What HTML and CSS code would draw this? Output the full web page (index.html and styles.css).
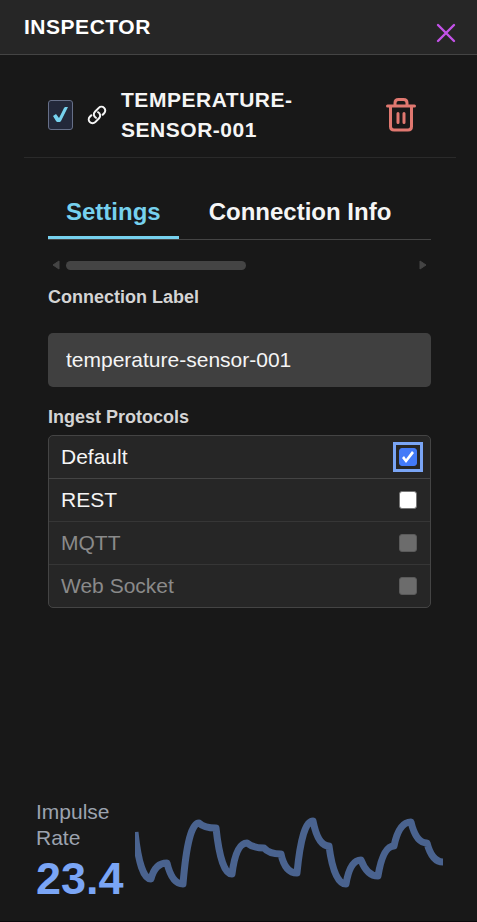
FILE: index.html
```html
<!DOCTYPE html>
<html lang="en">
<head>
<meta charset="utf-8">
<meta name="viewport" content="width=device-width, initial-scale=1">
<title>Inspector</title>
<link rel="stylesheet" href="styles.css">
</head>
<body>
<main class="inspector">
  <header class="topbar">
    <h1 class="heading">Inspector</h1>
    <button class="icon-button close" type="button" aria-label="Close">
      <svg width="20" height="20" viewBox="0 0 20 20"><path d="M2 2l16 16M18 2L2 18"/></svg>
    </button>
  </header>

  <section class="device">
    <input class="device-check" type="checkbox" checked aria-label="Enable device">
    <svg class="link-icon" width="22" height="22" viewBox="0 0 26 26"><path d="M14.190 9.688a4.5 4.5 0 0 1 1.242 7.244l-4.5 4.5a4.5 4.5 0 0 1-6.364-6.364l1.757-1.757m13.35-.622l1.757-1.757a4.5 4.5 0 0 0-6.364-6.364l-4.5 4.5a4.5 4.5 0 0 0 1.242 7.244"/></svg>
    <h2 class="heading device-name">Temperature-sensor-001</h2>
    <button class="icon-button trash" type="button" aria-label="Delete">
      <svg width="30" height="34" viewBox="0 0 30 34"><path d="M1.500 8h27M9 8V5q0-3.500 3.500-3.500h5Q21 1.500 21 5v3M4.500 8v20.500q0 3.500 3.500 3.500h14q3.500 0 3.500-3.500V8M12 15.500v9M18 15.500v9"/></svg>
    </button>
  </section>

  <div class="content">
    <nav class="tabs">
      <button class="tab active" type="button">Settings</button>
      <button class="tab" type="button">Connection Info</button>
    </nav>
    <div class="scroller">
      <svg width="8" height="10" viewBox="0 0 8 10"><path d="M7 1v8L1 5z"/></svg>
      <div class="track"><div class="thumb"></div></div>
      <svg width="8" height="10" viewBox="0 0 8 10"><path d="M1 1v8L7 5z"/></svg>
    </div>

    <label class="caption" for="connection-label">Connection Label</label>
    <input class="text-field" id="connection-label" type="text" value="temperature-sensor-001">

    <fieldset class="protocols">
      <legend class="caption">Ingest Protocols</legend>
      <div class="protocol-list">
        <label class="protocol">Default<input class="box focused" type="checkbox" checked></label>
        <label class="protocol">REST<input class="box" type="checkbox"></label>
        <label class="protocol disabled">MQTT<input class="box" type="checkbox" disabled></label>
        <label class="protocol disabled">Web Socket<input class="box" type="checkbox" disabled></label>
      </div>
    </fieldset>
  </div>

  <footer class="rate">
    <div class="rate-text">
      <div class="rate-label">Impulse Rate</div>
      <div class="rate-value">23.4</div>
    </div>
    <svg class="chart" viewBox="0 0 308 80"><path d="M0 17Q5 64 16 64Q20 48 32 48Q37 69 48 69Q53 8 64 8Q69 13 81 13Q86 59 97 59Q101 28 112 28Q118 33 129 33Q134 39 146 39Q150 58 162 58Q167 6 178 6Q183 31 194 31Q199 69 211 69Q215 45 226 45Q232 61 243 61Q248 31 259 31Q264 7 276 7Q281 28 292 28Q297 47 308 47"/></svg>
  </footer>
</main>
</body>
</html>
```
FILE: styles.css
```css
*, ::before, ::after { box-sizing: border-box; }

body {
  margin: 0;
  background: #181818;
  color: #f5f5f5;
  font-family: "Liberation Sans", Arial, sans-serif;
  font-size: 21px;
}

button, input { font: inherit; color: inherit; margin: 0; }

.inspector {
  display: flex;
  flex-direction: column;
  min-height: 100vh;
  border-bottom: 1px solid #0c080c;
}

.topbar {
  display: flex;
  justify-content: space-between;
  align-items: flex-start;
  padding: 12px 21px 11px 24px;
  background: #262626;
  border-bottom: 1px solid #444;
}

.heading {
  margin: 0;
  font-size: 21px;
  line-height: 30px;
  font-weight: 700;
  letter-spacing: 0.025em;
  text-transform: uppercase;
}

.topbar .heading { color: #fff; }

.icon-button {
  display: block;
  padding: 0;
  border: 0;
  background: none;
}

.icon-button svg, .link-icon {
  display: block;
  fill: none;
  stroke: currentColor;
  stroke-width: 2.4;
  stroke-linecap: round;
  stroke-linejoin: round;
}

.close { color: #c352e8; padding-top: 11px; }

.device {
  display: flex;
  align-items: center;
  margin: 0 21px 0 24px;
  padding: 30px 40px 12px 24px;
  border-bottom: 1px solid #2a2a2a;
}

.device-check {
  appearance: none;
  display: grid;
  place-items: center;
  flex: none;
  width: 25px;
  height: 30px;
  border: 1px solid #666f88;
  border-radius: 3px;
  background: #23283a;
}

.device-check:checked::before {
  content: "";
  width: 15px;
  height: 16px;
  background: #76d1ee;
  clip-path: path("M0 9L3 7L6 11L11 1L12 0L15 0L8 14L7 15L4 15L3 14Z");
}

.link-icon { flex: none; margin-left: 13px; }

.device-name { flex: 1; margin-left: 13px; }

.trash { color: #e07870; }
.trash svg { stroke-width: 3; }

.content { padding: 32px 46px 0 48px; }

.tabs {
  display: flex;
  gap: 12px;
  border-bottom: 1px solid #444;
}

.tab {
  padding: 6px 18px 9px;
  border: 0;
  border-bottom: 3px solid transparent;
  background: none;
  font-size: 24px;
  line-height: 31px;
  font-weight: 700;
  white-space: nowrap;
}

.tab.active { color: #76d1ee; border-color: #76d1ee; }

.scroller {
  display: flex;
  align-items: center;
  gap: 6px;
  margin-top: 20px;
  padding: 0 4px;
}

.scroller svg {
  fill: #444;
  stroke: #444;
  stroke-width: 1;
  stroke-linejoin: round;
}

.track { flex: 1; }

.thumb {
  width: 52%;
  height: 9px;
  border-radius: 5px;
  background: #444;
}

.caption {
  display: block;
  padding: 0;
  color: #d4d4d4;
  font-size: 18px;
  line-height: 26px;
  font-weight: 700;
}

.scroller + .caption { margin-top: 14px; }

.text-field {
  display: block;
  width: 100%;
  height: 54px;
  margin-top: 23px;
  padding: 0 18px;
  border: 0;
  border-radius: 5px;
  background: #404040;
}

.protocols { margin: 17px 0 0; padding: 0; border: 0; min-width: 0; }

.protocol-list {
  margin-top: 5px;
  border: 1px solid #444;
  border-radius: 5px;
  background: #262626;
}

.protocol {
  display: flex;
  justify-content: space-between;
  align-items: center;
  height: 43px;
  padding: 0 13px 0 12px;
  border-bottom: 1px solid #444;
}

.protocol.disabled { color: #8a8a8a; }
.protocol:nth-child(n + 2) { border-color: #363636; }
.protocol:last-child { height: 42px; border-bottom: 0; }

.box {
  appearance: none;
  display: grid;
  place-items: center;
  width: 18px;
  height: 18px;
}

.box::before, .box::after { content: ""; grid-area: 1 / 1; }

.box::before {
  width: 18px;
  height: 18px;
  border: 1px solid #777;
  border-radius: 3px;
  background: #fff;
}

.box:disabled::before { background: #6c6c6c; border-color: #5a5a5a; }

.box:checked::before { background: #437af8; border-color: #437af8; }

.box:checked::after {
  width: 14px;
  height: 14px;
  background: #fff;
  clip-path: path("M1 8L3 6L5 9L11 1L13 3L5 13Z");
}

.focused { outline: 3px solid #7aa5f5; outline-offset: 3px; }

.rate {
  display: flex;
  align-items: center;
  gap: 11px;
  margin-top: auto;
  padding: 0 34px 14px 36px;
}

.rate-text { flex: none; width: 88px; }

.rate-label { color: #9ca3af; line-height: 26px; }

.rate-value {
  color: #7aa5f5;
  font-size: 45px;
  line-height: 56px;
  font-weight: 700;
}

.chart {
  flex: 1;
  min-width: 0;
  margin-top: 4px;
  fill: none;
  stroke: #4a638f;
  stroke-width: 7;
  stroke-linejoin: round;
}
```
